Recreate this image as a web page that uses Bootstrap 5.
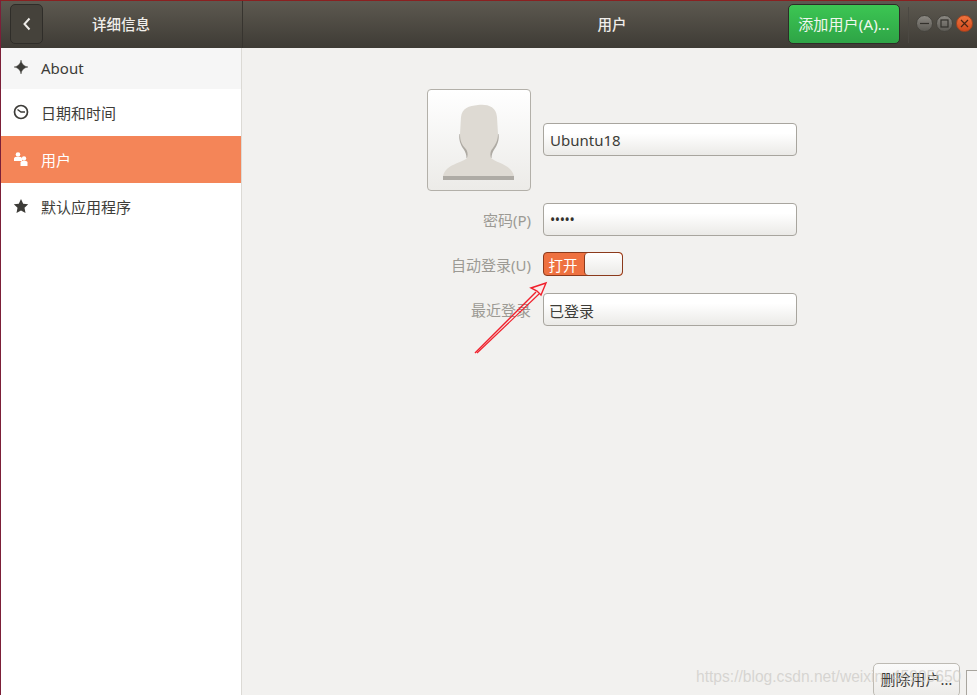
<!DOCTYPE html>
<html lang="zh">
<head>
  <meta charset="UTF-8">
  <title>详细信息 - 用户</title>
  <link href="https://cdn.jsdelivr.net/npm/bootstrap@5.3.3/dist/css/bootstrap.min.css" rel="stylesheet">
  <style>
    html, body { height: 100%; overflow: hidden; }
    body {
      background-color: #f2f1ef;
      color: #3d3c38;
      font-family: "Noto Sans", "Noto Sans CJK SC", sans-serif;
      font-size: 15px;
    }
    .app-window {
      position: relative;
      width: 977px;
      height: 695px;
      overflow: hidden;
      border-left: 1px solid #7c1f38;
    }
    .app-header {
      height: 48px;
      color: #f0eeea;
      background: linear-gradient(#5d5950, #3e3b35);
      border-top: 1px solid #8a2020;
    }
    .head-left { width: 241px; padding-left: 9px; flex: none; }
    .head-main { border-left: 1px solid #37342f; padding-right: 3px; }
    .back-btn {
      width: 33px;
      height: 40px;
      padding: 0;
      margin-top: 3px;
      flex: none;
      background: #45423b;
      border: 1px solid #2f2d29;
      border-radius: 5px;
    }
    .head-title { font-size: 14.5px; font-weight: 500; }
    .title-left { width: 156px; text-align: center; }
    .title-main { flex: 1; text-align: center; padding-left: 193px; }
    .add-btn {
      width: 112px;
      height: 40px;
      margin-top: 3px;
      padding: 0;
      flex: none;
      font-size: 15px;
      letter-spacing: .15px;
      color: #f0f7ee;
      background: linear-gradient(#3cc653, #2ea446);
      border: 1px solid #2e2c28;
      border-radius: 5px;
    }
    .head-sep { width: 1px; height: 36px; margin: 6px 5px 0 8px; background: #4b4842; flex: none; }
    .win-btn {
      width: 17px;
      height: 17px;
      margin: 14px 1.5px 0;
      flex: none;
      background: linear-gradient(#8b8882, #5c5a54);
      border: 1px solid #46443e;
    }
    .win-close { background: linear-gradient(#f0743e, #d2491c); border-color: #a5441f; }
    .side-pane {
      width: 241px;
      background: #fff;
      border-right: 1px solid #dcdad5;
      flex: none;
    }
    .side-pane .list-group-item {
      height: 47px;
      padding: 0 0 0 12px;
      gap: 12px;
      color: #3d3c38;
      border: 0;
      font-size: 15px;
      background: #fff;
    }
    .side-pane .list-group-item.side-first { height: 41px; background: #f6f6f6; }
    .side-pane .list-group-item.active { background: #f48558; color: #fff; margin-top: 0; }
    .side-icon { width: 16px; height: 16px; flex: none; margin-top: -1px; }
    .side-first .side-icon { margin-top: -3px; }
    .side-text { margin-top: 2px; }
    .side-first .side-text { margin-top: 0; }
    .main-pane { flex: 1; padding: 41px 0 0 185px; min-width: 0; }
    .form-layout {
      display: grid;
      grid-template-columns: 104px 254px;
      column-gap: 12px;
      align-items: center;
    }
    .avatar-box {
      width: 104px;
      height: 102px;
      background: linear-gradient(#fff, #ecebe8);
      border: 1px solid #b3b0a9;
      border-radius: 4px;
    }
    .avatar-box svg { margin-top: 4px; }
    .field-box {
      height: 33px;
      padding: 0 6px;
      display: flex;
      align-items: center;
      color: #3d3c38;
      font-size: 15px;
      background: linear-gradient(#fff 30%, #ebeae7);
      border: 1px solid #a8a59e;
      border-radius: 4px;
    }
    .field-name { align-self: start; margin-top: 34px; padding-top: 2px; }
    .field-label { color: #9c9a94; font-size: 15px; text-align: right; white-space: nowrap; padding-top: 2px; }
    .dots { letter-spacing: -.4px; font-size: 14px; color: #33312c; }
    .row-pass { margin-top: 12px; }
    .row-auto { margin-top: 16px; }
    .row-last { margin-top: 16px; }
    .last-text { margin: 4px 0 0 -1px; }
    .toggle-box {
      width: 80px;
      height: 24px;
      display: flex;
      background: #ee7140;
      border: 1px solid #8b3a1c;
      border-radius: 4px;
      overflow: hidden;
      color: #fff;
      font-size: 14.5px;
    }
    .toggle-text { width: 40px; text-align: center; line-height: 24px; padding-right: 2px; }
    .toggle-knob {
      flex: 1;
      background: linear-gradient(#fff, #ebeae7);
      border-left: 1px solid #8b3a1c;
      border-radius: 4px;
    }
    .foot-row { margin-top: 337px; padding-right: 17px; }
    .del-btn {
      width: 87px;
      height: 34px;
      flex: none;
      padding: 0;
      font-size: 15px;
      color: #3d3c38;
      background: linear-gradient(#fbfbfa, #ecebe8);
      border: 1px solid #bdbab3;
      border-radius: 5px;
      white-space: nowrap;
    }
    .foot-stub {
      position: absolute;
      left: 965px;
      top: 670px;
      width: 14px;
      height: 30px;
      background: #f7f6f5;
      border: 1px solid #a8a59e;
    }
    .watermark {
      position: absolute;
      left: 695px;
      top: 667px;
      font-family: "Liberation Sans", sans-serif;
      font-size: 15.6px;
      line-height: 20px;
      color: rgba(205, 203, 199, .75);
      white-space: nowrap;
      pointer-events: none;
    }
    .arrow-mark { position: absolute; left: 465px; top: 275px; width: 90px; height: 85px; pointer-events: none; }
  </style>
</head>
<body>
  <div class="app-window">
    <div class="app-header d-flex">
      <div class="head-left d-flex">
        <button class="btn back-btn d-flex align-items-center justify-content-center" type="button" aria-label="返回">
          <svg width="10" height="14" viewBox="0 0 10 14"><path d="M7.5 1.5 2.5 7l5 5.5" fill="none" stroke="#eeece8" stroke-width="2"/></svg>
        </button>
        <div class="head-title title-left align-self-center">详细信息</div>
      </div>
      <div class="head-main flex-grow-1 d-flex">
        <div class="head-title title-main align-self-center">用户</div>
        <button class="btn add-btn" type="button">添加用户(A)…</button>
        <div class="head-sep"></div>
        <div class="win-btn rounded-circle d-flex align-items-center justify-content-center">
          <svg width="9" height="9" viewBox="0 0 9 9"><path d="M0 4.500h9" stroke="#33312c" stroke-width="1.200"/></svg>
        </div>
        <div class="win-btn rounded-circle d-flex align-items-center justify-content-center">
          <svg width="9" height="9" viewBox="0 0 9 9"><rect x="1" y="1" width="7" height="7" fill="none" stroke="#33312c" stroke-width="1.200"/></svg>
        </div>
        <div class="win-btn win-close rounded-circle d-flex align-items-center justify-content-center">
          <svg width="9" height="9" viewBox="0 0 9 9"><path d="m1 1 7 7M8 1 1 8" stroke="#4a2412" stroke-width="1.200"/></svg>
        </div>
      </div>
    </div>

    <div class="d-flex" style="height: 647px">
      <div class="side-pane">
        <div class="list-group list-group-flush">
          <div class="list-group-item side-first d-flex align-items-center">
            <svg class="side-icon" viewBox="0 0 16 16"><path d="M8 1C8.600 5 10.800 7.300 15 8 10.800 8.700 8.600 11 8 15 7.400 11 5.200 8.700 1 8 5.200 7.300 7.400 5 8 1Z" fill="#3d3c38" stroke="#3d3c38" stroke-width=".4"/></svg>
            <span class="side-text">About</span>
          </div>
          <div class="list-group-item d-flex align-items-center">
            <svg class="side-icon" viewBox="0 0 16 16"><circle cx="8" cy="8" r="6.500" fill="none" stroke="#3d3c38" stroke-width="1.700"/><path d="M4.500 5.500 8 8h4" fill="none" stroke="#3d3c38" stroke-width="1.500"/></svg>
            <span class="side-text">日期和时间</span>
          </div>
          <div class="list-group-item active d-flex align-items-center">
            <svg class="side-icon" viewBox="0 0 16 16" fill="#fff"><circle cx="5" cy="3.500" r="2.300"/><path d="M1 7.500c0-1 1-1.500 2-1.500h4c1 0 2 .5 2 1.500V10H1Z"/><circle cx="11" cy="7.500" r="2.200"/><path d="M7.500 11.500c0-1 1-1.500 2-1.500h3c1 0 2 .5 2 1.500V15h-7Z"/></svg>
            <span class="side-text">用户</span>
          </div>
          <div class="list-group-item d-flex align-items-center">
            <svg class="side-icon" viewBox="0 0 16 16"><path d="m8 1 2.200 4.700 5 .6-3.700 3.500 1 5.100L8 12.400l-4.500 2.500 1-5.100L.8 6.300l5-.6Z" fill="#3d3c38"/></svg>
            <span class="side-text">默认应用程序</span>
          </div>
        </div>
      </div>

      <div class="main-pane">
        <div class="form-layout">
          <div class="avatar-box d-flex align-items-center justify-content-center">
            <svg width="72" height="78" viewBox="0 0 72 78">
              <path d="M16.500 31c-1 5 1 11 4 15 2 3 3 6 3 9h25c0-3 1-6 3-9 3-4 5-10 4-15Z" fill="#aeaaa3"/>
              <path d="M35 2C44 1 53 3 54 14l1 17C55 38 52 42 50 45 47 48 47 52 48 55 53 60 68 61 71 73H0C3 61 19 60 24 55 25 52 25 48 22 45 19 42 17 38 17 31l1-17C19 5 26 3 35 2Z" fill="#dedad3"/>
              <rect x="0" y="73" width="71" height="4" fill="#aeaba5"/>
            </svg>
          </div>
          <div class="field-box field-name">Ubuntu18</div>

          <div class="field-label row-pass">密码(P)</div>
          <div class="field-box row-pass"><span class="dots">•••••</span></div>

          <div class="field-label row-auto">自动登录(U)</div>
          <div class="toggle-box row-auto">
            <div class="toggle-text">打开</div>
            <div class="toggle-knob"></div>
          </div>

          <div class="field-label row-last">最近登录</div>
          <div class="field-box row-last"><span class="last-text">已登录</span></div>
        </div>

        <div class="foot-row d-flex justify-content-end">
          <button class="btn del-btn" type="button">删除用户…</button>
        </div>
      </div>
    </div>

    <div class="foot-stub"></div>
    <div class="watermark">https://blog.csdn.net/weixin_45905650</div>
    <svg class="arrow-mark" viewBox="0 0 90 85">
      <path d="M9 78 70 17" fill="none" stroke="#f0202c" stroke-width="1.500"/>
      <path d="M11 78 73 19" fill="none" stroke="#f0202c" stroke-width="1.200"/>
      <path d="M80 8 65 13 71 16 75 20Z" fill="#fbeaea" stroke="#f0202c" stroke-width="1.400"/>
    </svg>
  </div>

  <script src="https://cdn.jsdelivr.net/npm/bootstrap@5.3.3/dist/js/bootstrap.bundle.min.js"></script>
</body>
</html>
